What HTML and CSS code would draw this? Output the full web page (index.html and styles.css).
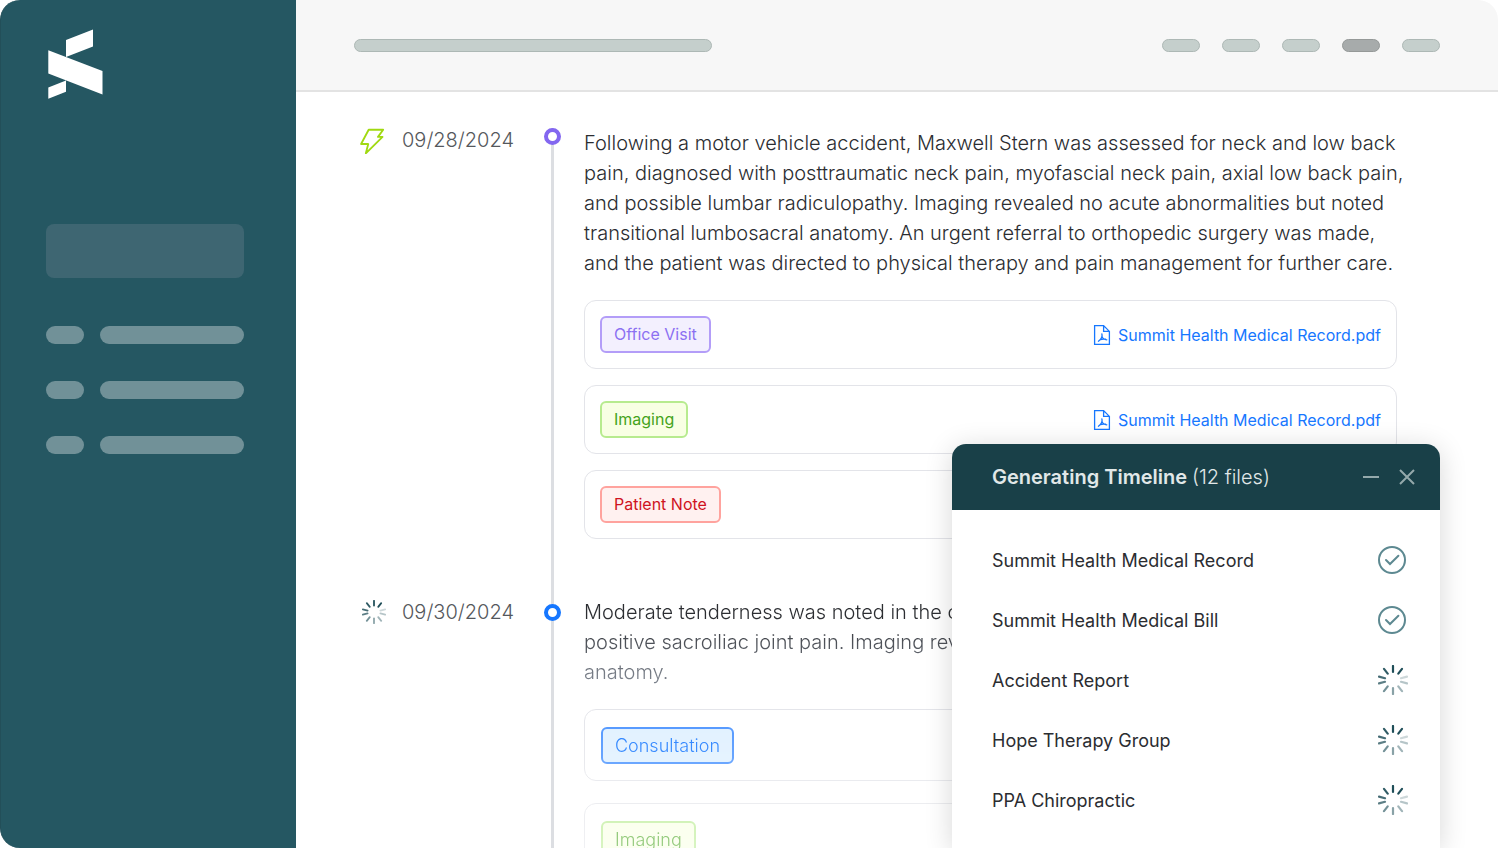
FILE: index.html
```
<!DOCTYPE html>
<html lang="en">
<head>
    <meta charset="UTF-8">
    <meta name="viewport" content="width=device-width, initial-scale=1.0">
    <title>Medical Timeline</title>
    <link rel="stylesheet" href="styles.css">
</head>
<body>
    <svg class="sprite" aria-hidden="true">
        <symbol id="pdf" viewBox="0 0 18 22">
            <path d="M1.6 1.6H10.6L16.4 7.4V20.4H1.6Z M10.6 1.6V7.4H16.4" fill="none" stroke="currentColor" stroke-width="1.3"/>
            <path d="M8.9 9.8C9.6 12.6 8.4 15 5.4 17.2M9 12.4C9.6 14.4 11 15.6 13.8 15.8M6.6 16C8.4 15.2 10.6 14.9 12.6 15.2" fill="none" stroke="currentColor" stroke-width="1.3" stroke-linecap="round"/>
        </symbol>
        <symbol id="check" viewBox="0 0 28 28">
            <circle cx="14" cy="14" r="13" fill="none" stroke="#5d8991" stroke-width="2"/>
            <path d="M8 14L12 18L20.4 9.8" fill="none" stroke="#5d8991" stroke-width="2" stroke-linecap="round"/>
        </symbol>
        <symbol id="spinner" viewBox="0 0 30 30">
            <g stroke="#1f4e58" stroke-width="2.2" stroke-linecap="round">
                <path d="M15 1V7"/>
                <path d="M24 3.9L20.3 8.6"/>
                <path d="M29 11.6L23 13.2" opacity=".22"/>
                <path d="M29 18.4L23 16.8" opacity=".32"/>
                <path d="M24 26.1L20.3 21.4" opacity=".42"/>
                <path d="M15 29V23" opacity=".52"/>
                <path d="M6 26.1L9.7 21.4" opacity=".62"/>
                <path d="M1 18.4L7 16.8" opacity=".72"/>
                <path d="M1 11.6L7 13.2" opacity=".82"/>
                <path d="M6 3.9L9.7 8.6" opacity=".92"/>
            </g>
        </symbol>
    </svg>

    <div class="app">
        <aside class="sidebar">
            <svg class="logo" viewBox="0 0 56 70">
                <path d="M18 11L45 0.5V17.5L18 28Z M0.3 21.3L54.5 42V65.5L0.3 44.5Z M0.3 58.5L18 51.5V62.8L0.3 69.8Z" fill="#fff"/>
            </svg>
            <div class="side-block"></div>
            <div class="side-row"><span></span><span></span></div>
            <div class="side-row"><span></span><span></span></div>
            <div class="side-row"><span></span><span></span></div>
        </aside>

        <main class="main">
            <header class="topbar">
                <div class="search-bar"></div>
                <div class="tabs">
                    <span></span>
                    <span></span>
                    <span></span>
                    <span class="active"></span>
                    <span></span>
                </div>
            </header>

            <section class="timeline">
                <article class="entry">
                    <svg class="entry-icon bolt" viewBox="2 0 24 24">
                        <path d="M10 1.6H23.4L18.6 8.2H22.8L7.4 23.4L9.6 14.8H3Z" fill="none" stroke="#a0d911" stroke-width="1.7" stroke-linejoin="round"/>
                    </svg>
                    <time class="entry-date" datetime="2024-09-28">09/28/2024</time>
                    <div class="rail"><span class="dot"></span></div>
                    <div class="entry-body">
                        <p>Following a motor vehicle accident, Maxwell Stern was assessed for neck and low back<br>
                            pain, diagnosed with posttraumatic neck pain, myofascial neck pain, axial low back pain,<br>
                            and possible lumbar radiculopathy. Imaging revealed no acute abnormalities but noted<br>
                            transitional lumbosacral anatomy. An urgent referral to orthopedic surgery was made,<br>
                            and the patient was directed to physical therapy and pain management for further care.</p>
                        <div class="records">
                            <div class="record">
                                <span class="tag purple">Office Visit</span>
                                <a href="#"><svg><use href="#pdf"/></svg>Summit Health Medical Record.pdf</a>
                            </div>
                            <div class="record">
                                <span class="tag green">Imaging</span>
                                <a href="#"><svg><use href="#pdf"/></svg>Summit Health Medical Record.pdf</a>
                            </div>
                            <div class="record">
                                <span class="tag red">Patient Note</span>
                            </div>
                        </div>
                    </div>
                </article>

                <article class="entry pending">
                    <svg class="entry-icon"><use href="#spinner"/></svg>
                    <time class="entry-date" datetime="2024-09-30">09/30/2024</time>
                    <div class="rail"><span class="dot"></span></div>
                    <div class="entry-body">
                        <p>Moderate tenderness was noted in the c<br>
                            positive sacroiliac joint pain. Imaging rev<br>
                            anatomy.</p>
                        <div class="records">
                            <div class="record">
                                <span class="tag blue">Consultation</span>
                            </div>
                            <div class="record">
                                <span class="tag green">Imaging</span>
                            </div>
                        </div>
                    </div>
                </article>
            </section>
        </main>

        <section class="popup">
            <header class="popup-header">
                <h2>Generating Timeline <span>(12 files)</span></h2>
                <button aria-label="Minimize"><svg viewBox="0 0 16 16"><path d="M0 8H16"/></svg></button>
                <button aria-label="Close"><svg viewBox="0 0 16 16"><path d="M1 1L15 15M15 1L1 15"/></svg></button>
            </header>
            <ul class="files">
                <li>Summit Health Medical Record <svg class="done"><use href="#check"/></svg></li>
                <li>Summit Health Medical Bill <svg class="done"><use href="#check"/></svg></li>
                <li>Accident Report <svg><use href="#spinner"/></svg></li>
                <li>Hope Therapy Group <svg><use href="#spinner"/></svg></li>
                <li>PPA Chiropractic <svg><use href="#spinner"/></svg></li>
            </ul>
        </section>
    </div>
</body>
</html>
```
FILE: styles.css
```
* {
    box-sizing: border-box;
    margin: 0;
    padding: 0;
}
body {
    font-family: Inter, "Liberation Sans", sans-serif;
    font-weight: 300;
    font-size: 20px;
    color: #2b2d31;
    background-color: #fff;
}
.sprite {
    display: none;
}
.app {
    position: relative;
    display: flex;
    height: 100vh;
    overflow: hidden;
}

/* sidebar */
.sidebar {
    flex: none;
    width: 296px;
    padding: 29px 52px 0 45px;
    background-color: #255762;
    border-left: 1px solid #234f59;
    border-radius: 20px 0 0 20px;
}
.logo {
    display: block;
    width: 56px;
    height: 70px;
    margin-left: 2px;
    margin-bottom: 125px;
}
.side-block {
    height: 54px;
    margin-bottom: 48px;
    border-radius: 8px;
    background-color: #3e6672;
}
.side-row {
    display: flex;
    gap: 16px;
    margin-bottom: 37px;
}
.side-row span {
    flex: 1;
    height: 18px;
    border-radius: 9px;
    background-color: #719198;
}
.side-row span:first-child {
    flex: none;
    width: 38px;
}

/* top bar */
.main {
    flex: 1;
    min-width: 0;
}
.topbar {
    display: flex;
    justify-content: space-between;
    align-items: center;
    height: 92px;
    padding: 0 58px;
    background-color: #f7f7f7;
    border-bottom: 2px solid #e3e3e3;
    border-top-right-radius: 20px;
}
.search-bar, .tabs span {
    height: 13px;
    border: 1px solid #adb8b5;
    border-radius: 7px;
    background-color: #c5cfcc;
}
.search-bar {
    width: 358px;
}
.tabs {
    display: flex;
    gap: 22px;
}
.tabs span {
    width: 38px;
}
.tabs .active {
    border-color: #959998;
    background-color: #a7abab;
}

/* timeline */
.timeline {
    padding: 36px 97px 0 64px;
}
.entry {
    display: grid;
    grid-template-columns: 26px 136px 62px minmax(0, 1fr);
}
.entry-icon {
    width: 26px;
    height: 26px;
}
.entry-date {
    padding-left: 16px;
    line-height: 24px;
    color: #55585c;
}
.rail {
    position: relative;
    padding-left: 22px;
}
.rail::before {
    content: "";
    position: absolute;
    top: 0;
    bottom: 0;
    left: 29px;
    width: 3px;
    background-color: #dcdee2;
}
.dot {
    position: relative;
    display: block;
    width: 17px;
    height: 17px;
    border: 4px solid #8367f0;
    border-radius: 50%;
    background-color: #fff;
}
.entry-body p {
    line-height: 30px;
    white-space: nowrap;
}
.records {
    display: flex;
    flex-direction: column;
    gap: 16px;
    padding: 22px 4px 58px 0;
}
.record {
    display: flex;
    justify-content: space-between;
    align-items: center;
    height: 69px;
    padding: 0 15px;
    border: 1px solid #e3e4e9;
    border-radius: 12px;
}
.record a {
    display: flex;
    align-items: center;
    gap: 7px;
    font-size: 16px;
    font-weight: 400;
    color: #1677ff;
    text-decoration: none;
}
.record a svg {
    width: 18px;
    height: 22px;
}
.tag {
    padding: 0 12px;
    border: 2px solid;
    border-radius: 6px;
    font-size: 16px;
    font-weight: 400;
    line-height: 33px;
}
.tag.purple {
    color: #8c70f2;
    border-color: #b39df8;
    background-color: #f3f0fe;
}
.tag.green {
    color: #44a31b;
    border-color: #b7eb8f;
    background-color: #f8ffe4;
}
.tag.red {
    color: #cf1322;
    border-color: #ffa39e;
    background-color: #fff1f0;
}
.tag.blue {
    color: #1677ff;
    border-color: #4791ff;
    background-color: #dff0ff;
}

/* entry that is still loading fades out towards the bottom */
.pending p {
    color: transparent;
    background: linear-gradient(#2b2d31 20px, #7a808a 80px);
    -webkit-background-clip: text;
    background-clip: text;
}
.pending .entry-body {
    -webkit-mask-image: linear-gradient(#000 100px, rgba(0, 0, 0, 0.55) 250px);
    mask-image: linear-gradient(#000 100px, rgba(0, 0, 0, 0.55) 250px);
}
.pending .entry-icon {
    height: 30px;
    padding: 3px 0 3px 2px;
}
.pending .entry-date {
    line-height: 30px;
}
.pending .dot {
    margin-top: 7px;
    border-color: #1677ff;
}
.pending .records {
    gap: 22px;
}
.pending .record {
    height: 72px;
    padding: 0 16px;
}
.pending .tag {
    font-size: 18px;
    font-weight: 300;
}

/* popup */
.popup {
    position: absolute;
    right: 58px;
    bottom: 0;
    width: 488px;
    border-radius: 14px 14px 0 0;
    background-color: #fff;
    box-shadow: 0 4px 28px rgba(0, 0, 0, 0.16);
}
.popup-header {
    display: flex;
    align-items: center;
    gap: 20px;
    height: 66px;
    padding: 0 25px 0 40px;
    border-radius: 14px 14px 0 0;
    background-color: #194048;
    color: #e1e8e8;
}
.popup-header h2 {
    flex: 1;
    font-size: 20px;
    font-weight: 600;
}
.popup-header h2 span {
    font-weight: 300;
}
.popup-header button {
    width: 16px;
    height: 16px;
    border: none;
    background: none;
    cursor: pointer;
}
.popup-header svg {
    display: block;
    width: 16px;
    height: 16px;
    fill: none;
    stroke: #94a9ab;
    stroke-width: 2;
}
.files {
    padding: 20px 32px 18px 40px;
    list-style: none;
}
.files li {
    display: flex;
    justify-content: space-between;
    align-items: center;
    height: 60px;
    font-size: 18px;
    font-weight: 400;
}
.files svg {
    width: 30px;
    height: 30px;
}
.files .done {
    width: 28px;
    height: 28px;
    margin-right: 2px;
}
```
